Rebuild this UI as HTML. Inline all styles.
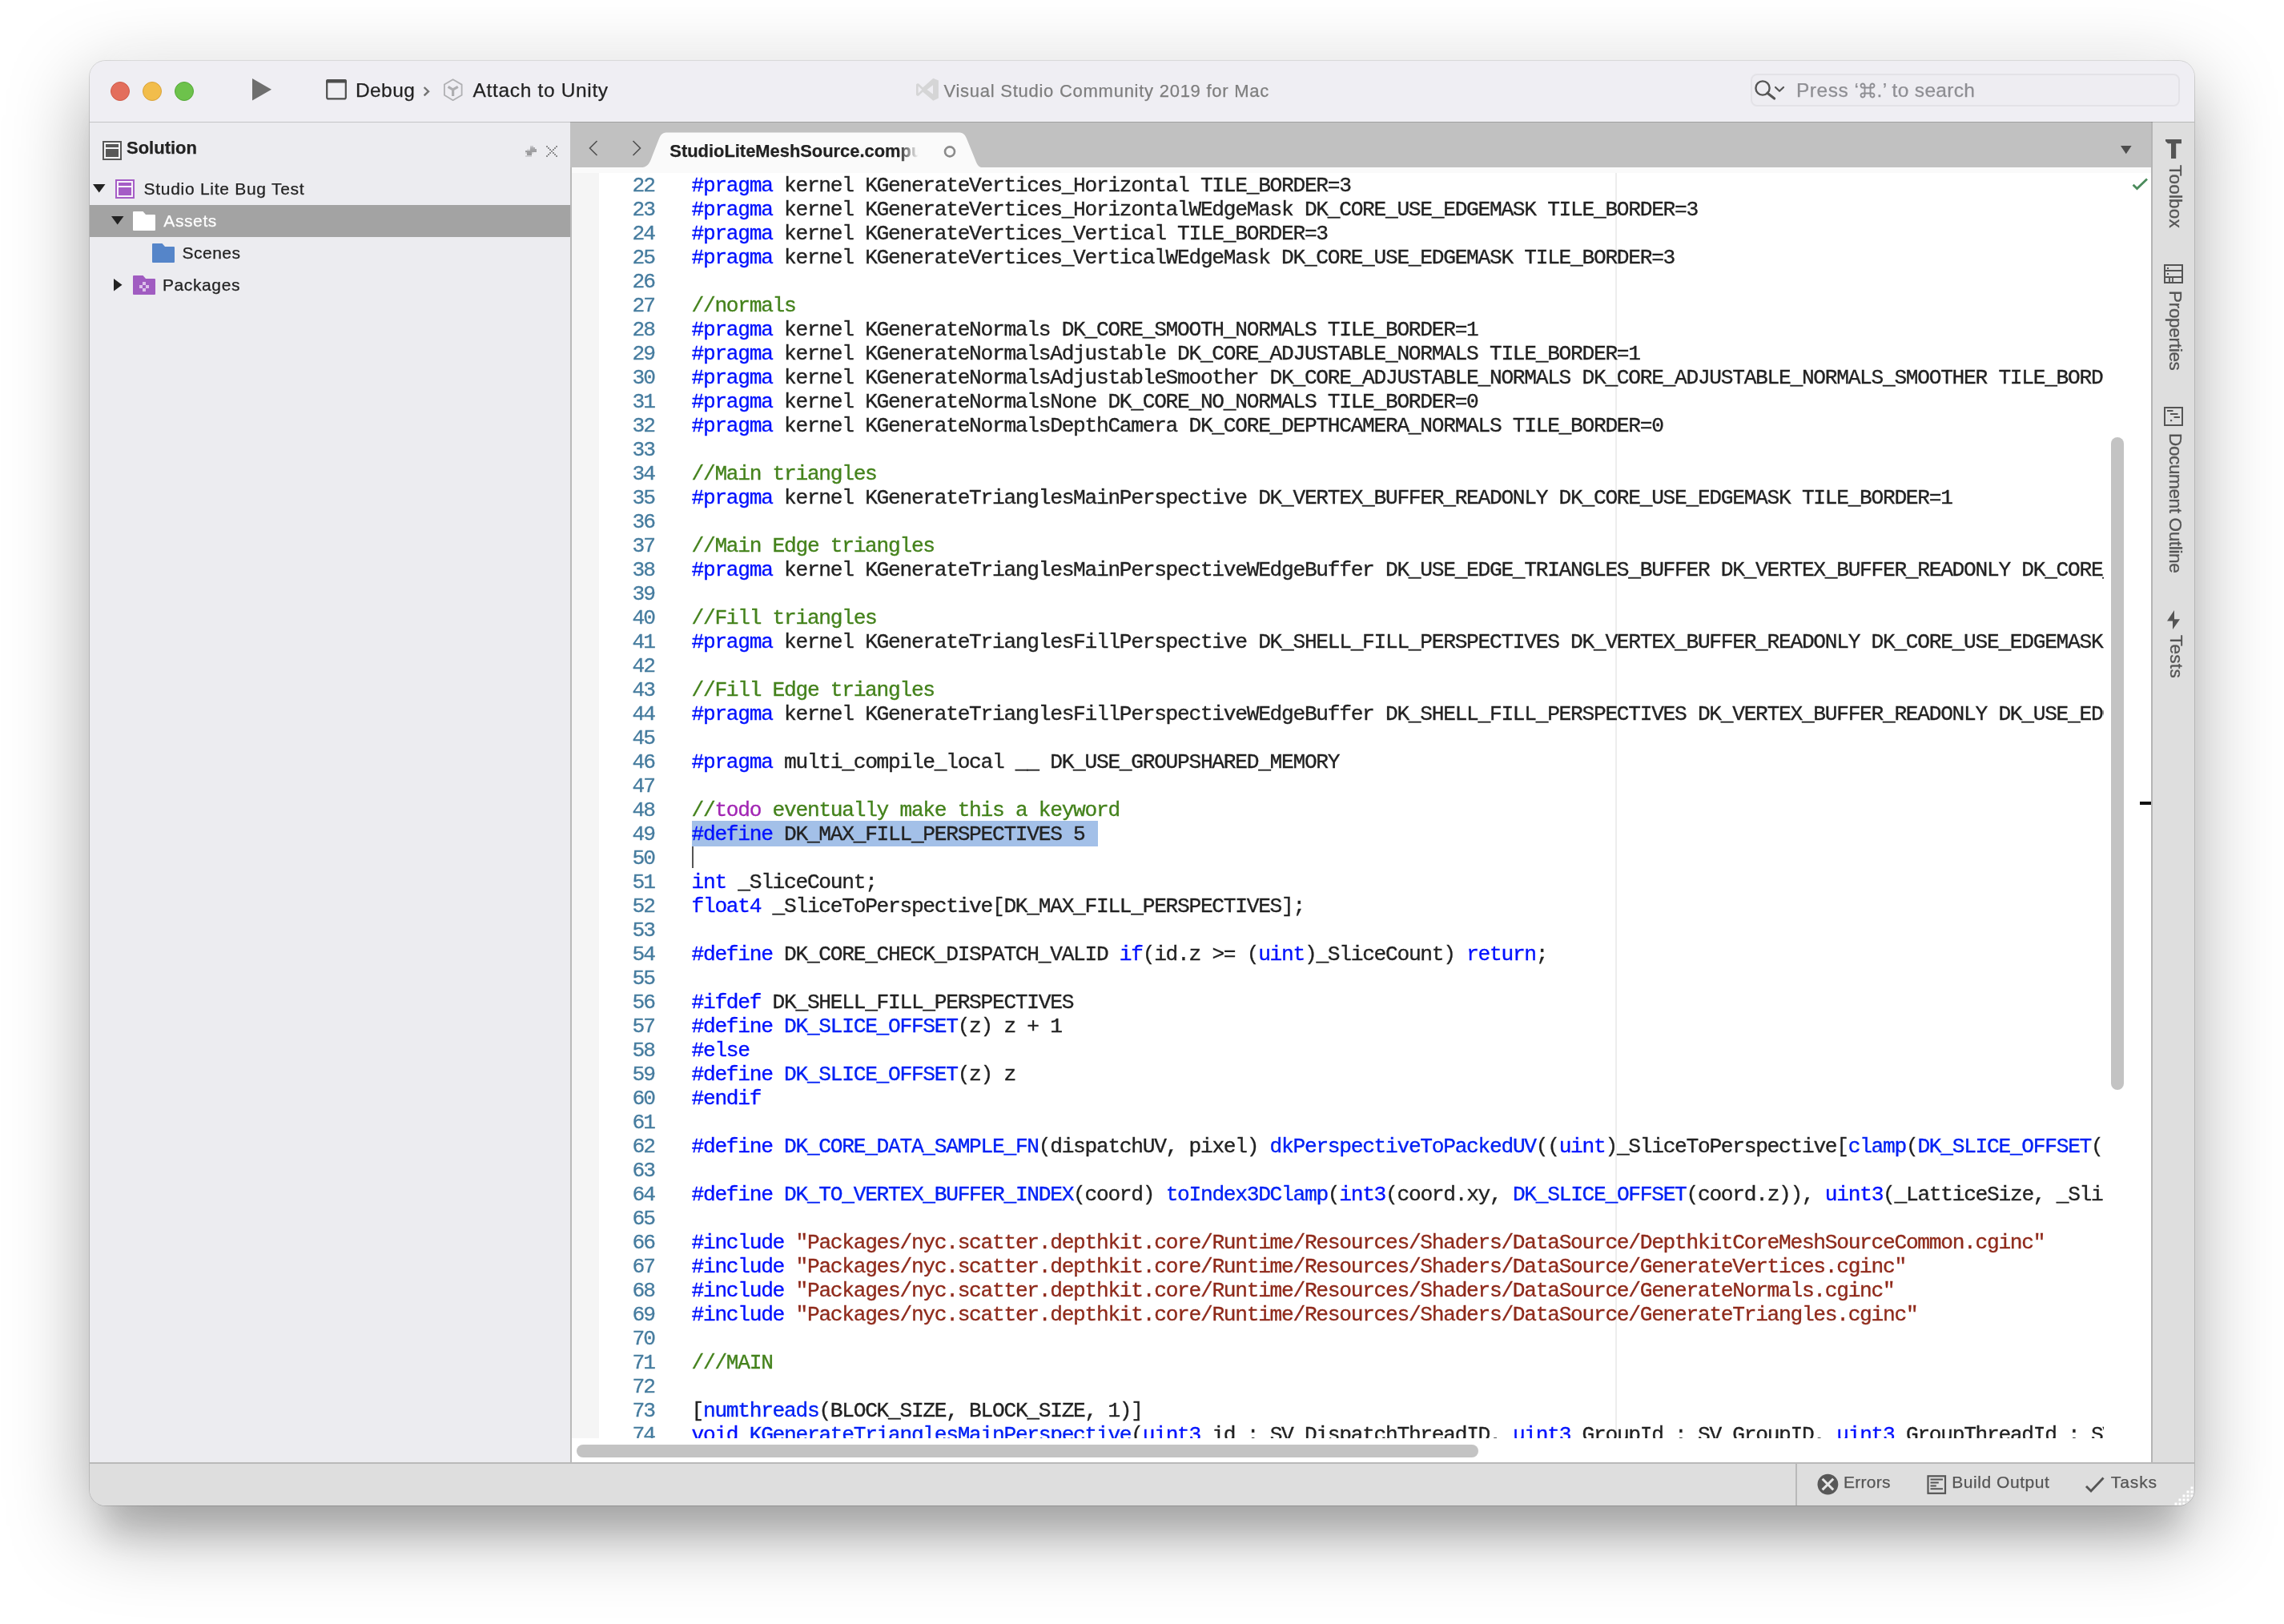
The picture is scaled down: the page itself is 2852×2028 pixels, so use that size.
<!DOCTYPE html>
<html lang="en"><head><meta charset="utf-8"><title>Visual Studio Community 2019 for Mac</title>
<style>
*{box-sizing:border-box;margin:0;padding:0}
html,body{width:2852px;height:2028px;background:#fff;overflow:hidden;font-family:"Liberation Sans",sans-serif}
body{position:relative;font-family:"Liberation Sans",sans-serif;color:#222}
i{font-style:normal}
.abs,.t{position:absolute}
.t{white-space:pre;line-height:40px;height:40px;-webkit-text-stroke:0.25px}
#win{position:absolute;left:112px;top:76px;width:2628px;height:1804px;border-radius:20px;background:#ececf0;
 box-shadow:0 -46px 30px -30px rgba(255,255,255,.35),0 0 0 1px rgba(0,0,0,.13),0 30px 100px rgba(0,0,0,.34),0 56px 36px -20px rgba(0,0,0,.12)}
#clip{will-change:transform;position:absolute;left:0;top:0;width:2628px;height:1804px;border-radius:20px;overflow:hidden}
#titlebar{left:0;top:0;width:2628px;height:76px;background:#efeef3}
#tbline{left:0;top:76px;width:2628px;height:1.4px;background:rgba(0,0,0,.17);z-index:5}
.light{position:absolute;top:26px;width:24px;height:24px;border-radius:50%}
#side{left:0;top:76px;width:600px;height:1675px;background:#ececf0}
#sel{left:0;top:180px;width:600px;height:40px;background:#a3a3a3}
#vdiv{left:600px;top:133px;width:2px;height:1618px;background:#b9b9b9}
#tabbar{left:600px;top:76px;width:1975px;height:57px;background:#c1c1c1}
#strip{left:602px;top:133px;width:1973px;height:7px;background:#fafafa}
#codebg{left:602px;top:140px;width:1973px;height:1610px;background:#fff}
#gutter{left:602px;top:140px;width:34px;height:1580px;background:#f5f5f5}
#ruler{left:1905px;top:140px;width:2px;height:1580px;background:#ededed}
#selhl{left:752px;top:949px;width:507px;height:31.5px;background:#a3c0e8}
#caret{left:752px;top:980.5px;width:2px;height:27.5px;background:#555}
.mono{font-family:"Liberation Mono",monospace;font-size:26px;letter-spacing:-1.155px;line-height:30px;white-space:pre;position:absolute}
#numclip{left:636px;top:140px;width:104px;height:1580px;overflow:hidden}
#nums{left:41.4px;top:0.91px;color:#467c9f;font-size:26.2px;letter-spacing:-1.9px;-webkit-text-stroke:0.3px}
#codeclip{left:740px;top:140px;width:1774.8px;height:1580px;overflow:hidden}
#code{left:11.5px;top:0.91px;color:#222;-webkit-text-stroke:0.35px;font-size:26.2px;letter-spacing:-1.2736px}
.k{color:#0010ff}.f{color:#0020f5}.c{color:#44821c}.s{color:#8f2a1b}.t0{color:#a01fa0}
#code .t{position:static;color:#a226b4;-webkit-text-stroke:inherit;line-height:inherit;height:auto}
#vthumb{left:2524px;top:470px;width:16px;height:815px;border-radius:8px;background:#c3c3c3}
#hthumb{left:608px;top:1728px;width:1126px;height:15.5px;border-radius:8px;background:#c3c3c3}
#marker{left:2560px;top:925px;width:14px;height:3.5px;background:#111}
#rside{left:2574px;top:76px;width:54px;height:1675px;background:#dedede;border-left:2px solid #b4b4b4}
#status{left:0;top:1750px;width:2628px;height:54px;background:#dedede;border-top:2px solid #b9b9b9}
#ssep{left:2130px;top:1751px;width:2px;height:53px;background:#b9b9b9}
.rot{-webkit-text-stroke:0.3px;position:absolute;white-space:pre;transform-origin:0 0;transform:rotate(90deg);font-size:22.5px;line-height:30px;height:30px;color:#555}
svg{position:absolute;overflow:visible}

</style></head>
<body>
<div id="win"><div id="clip">
<div class="abs" id="titlebar"></div>
<div class="abs" id="tbline"></div>
<div class="light" style="left:26px;background:#e36e5c;border:1px solid #cf5a48"></div>
<div class="light" style="left:66px;background:#f2bd4b;border:1px solid #d9a23a"></div>
<div class="light" style="left:106px;background:#6dc24b;border:1px solid #54a838"></div>
<svg style="left:203.00px;top:22.00px" width="24" height="28" viewBox="0 0 24 28"><path d="M0 0 L24 13.75 L0 27.5 Z" fill="#6e6e6e"/></svg>
<svg style="left:295.00px;top:22.00px" width="26" height="27" viewBox="0 0 26 27"><rect x="1.2" y="2" width="23.6" height="23.4" rx="2" fill="none" stroke="#4e4e4e" stroke-width="2.2"/><path d="M0.1 3 Q0.1 0.9 2.2 0.9 L23.8 0.9 Q25.9 0.9 25.9 3 L25.9 5.4 L0.1 5.4 Z" fill="#4e4e4e"/></svg>
<span class="t" style="left:332.00px;top:16.76px;font-size:24.5px;color:#222;letter-spacing:0.4px;">Debug</span>
<svg style="left:415.00px;top:30.00px" width="12" height="16" viewBox="0 0 12 16"><path d="M2.6 3 L8 8.2 L2.6 13.4" fill="none" stroke="#737373" stroke-width="2.4"/></svg>
<svg style="left:441.00px;top:22.00px" width="26" height="29" viewBox="0 0 26 29"><path d="M12.6 1.2 L23.6 7.6 L23.6 20.8 L12.6 27.2 L1.9 20.8 L1.9 7.6 Z" fill="none" stroke="#b0b0b3" stroke-width="1.8" stroke-linejoin="round"/><path d="M6.6 10.4 L12.6 14 L18.8 10.4 M12.6 14 L12.6 22" fill="none" stroke="#aeaeb1" stroke-width="3.2"/></svg>
<span class="t" style="left:478.55px;top:16.76px;font-size:24.5px;color:#222;letter-spacing:0.66px;">Attach to Unity</span>
<svg style="left:1031.00px;top:21.00px" width="30" height="30" viewBox="0 0 30 30"><path d="M22.3 0.8 L28.9 3.6 L28.9 25.5 L22.3 28.7 L9.3 17.8 L4.2 22.6 Q3 23.1 2 22.4 L1 21.6 L1 8.4 L2 7.6 Q3 6.9 4.2 7.4 L9.3 12.2 Z M22 9.3 L22 20.6 L14.6 15 Z M3.6 10.4 L3.6 19.6 L8.2 15 Z" fill="#d5d5d6" fill-rule="evenodd"/></svg>
<span class="t" style="left:1066.45px;top:17.78px;font-size:22px;color:#7e7e7e;letter-spacing:0.74px;">Visual Studio Community 2019 for Mac</span>
<div class="abs" style="left:2074px;top:16px;width:536px;height:41px;border-radius:8px;border:2px solid #e3e2e7;background:#eeedf2"></div>
<svg style="left:2078.00px;top:22.00px" width="40" height="28" viewBox="0 0 40 28"><circle cx="11" cy="12" r="8.6" fill="none" stroke="#555" stroke-width="2.4"/><path d="M17 18.3 L25.6 25" stroke="#555" stroke-width="3.2" stroke-linecap="round"/><path d="M27 11 L32 15.8 L37 11" fill="none" stroke="#555" stroke-width="2.2" stroke-linecap="round" stroke-linejoin="round"/></svg>
<span class="t" style="left:2131.00px;top:16.76px;font-size:24.5px;color:#8e8e93;letter-spacing:0.5px;">Press ‘</span>
<svg style="left:2210.00px;top:27.00px" width="20" height="20" viewBox="0 0 20 20"><path d="M6.5 6.5 H13.5 V13.5 H6.5 Z M6.5 6.5 V4.2 A2.5 2.5 0 1 0 4.2 6.5 Z M13.5 6.5 H15.8 A2.5 2.5 0 1 0 13.5 4.2 Z M13.5 13.5 V15.8 A2.5 2.5 0 1 0 15.8 13.5 Z M6.5 13.5 H4.2 A2.5 2.5 0 1 0 6.5 15.8 Z" fill="none" stroke="#8e8e93" stroke-width="1.9"/></svg>
<span class="t" style="left:2231.50px;top:16.76px;font-size:24.5px;color:#8e8e93;letter-spacing:0.32px;">.’ to search</span>
<div class="abs" id="side"></div>
<svg style="left:16.00px;top:100.00px" width="24" height="24" viewBox="0 0 24 24"><rect x="1" y="1" width="22" height="22" fill="#f4f4f6" stroke="#585858" stroke-width="2"/><rect x="4" y="4" width="16" height="4" fill="#585858"/><rect x="4" y="10" width="16" height="10" fill="#585858"/></svg>
<span class="t" style="left:46.00px;top:89.08px;font-size:22px;color:#222;font-weight:bold;">Solution</span>
<svg style="left:544.00px;top:106.00px" width="14" height="14" viewBox="0 0 14 14"><g fill="#9b9b9d"><rect x="6" y="0" width="4" height="2" fill-opacity="0.45"/><rect x="6" y="2" width="6" height="2" fill-opacity="0.8"/><rect x="2" y="4" width="4" height="2" fill-opacity="0.25"/><rect x="6" y="4" width="8" height="2" fill-opacity="0.9"/><rect x="0" y="6" width="14" height="2" fill-opacity="0.95"/><rect x="0" y="8" width="2" height="2" fill-opacity="0.3"/><rect x="2" y="8" width="6" height="2" fill-opacity="1.0"/><rect x="8" y="8" width="2" height="2" fill-opacity="0.3"/><rect x="2" y="10" width="6" height="2" fill-opacity="1.0"/><rect x="0" y="12" width="8" height="2" fill-opacity="0.35"/></g></svg>
<svg style="left:570.00px;top:106.00px" width="14" height="14" viewBox="0 0 14 14"><g fill="#8e8e90"><rect x="0" y="0" width="2" height="2"/><rect x="12" y="0" width="2" height="2"/><rect x="2" y="2" width="2" height="2"/><rect x="10" y="2" width="2" height="2"/><rect x="4" y="4" width="2" height="2"/><rect x="8" y="4" width="2" height="2"/><rect x="6" y="6" width="2" height="2"/><rect x="8" y="8" width="2" height="2"/><rect x="4" y="8" width="2" height="2"/><rect x="10" y="10" width="2" height="2"/><rect x="2" y="10" width="2" height="2"/><rect x="12" y="12" width="2" height="2"/><rect x="0" y="12" width="2" height="2"/></g></svg>
<div class="abs" id="sel"></div>
<svg style="left:3.50px;top:154.00px" width="16" height="11" viewBox="0 0 16 11"><path d="M0 0 L15.5 0 L7.75 10.5 Z" fill="#222"/></svg>
<svg style="left:32.00px;top:148.00px" width="24" height="24" viewBox="0 0 24 24"><rect x="1" y="1" width="22" height="22" fill="#f7f2fa" stroke="#a55cc6" stroke-width="2"/><rect x="4" y="4" width="16" height="4" fill="#a55cc6"/><rect x="4" y="10" width="16" height="10" fill="#a55cc6"/></svg>
<span class="t" style="left:67.50px;top:139.82px;font-size:21px;color:#222;letter-spacing:0.72px;">Studio Lite Bug Test</span>
<svg style="left:27.25px;top:194.00px" width="16" height="11" viewBox="0 0 16 11"><path d="M0 0 L15.5 0 L7.75 10.5 Z" fill="#222"/></svg>
<svg style="left:54.00px;top:188.00px" width="28" height="24" viewBox="0 0 28 24"><path d="M1 0 H12.5 L16 4 H27 Q28 4 28 5 V23 Q28 24 27 24 H1 Q0 24 0 23 V1 Q0 0 1 0 Z" fill="#ffffff"/></svg>
<span class="t" style="left:92.25px;top:179.82px;font-size:21px;color:#fff;letter-spacing:0.62px;">Assets</span>
<svg style="left:78.00px;top:228.00px" width="28" height="24" viewBox="0 0 28 24"><path d="M1 0 H12.5 L16 4 H27 Q28 4 28 5 V23 Q28 24 27 24 H1 Q0 24 0 23 V1 Q0 0 1 0 Z" fill="#5585c9"/></svg>
<span class="t" style="left:115.50px;top:219.82px;font-size:21px;color:#222;letter-spacing:0.5px;">Scenes</span>
<svg style="left:30.25px;top:271.75px" width="11" height="16" viewBox="0 0 11 16"><path d="M0 0 L10.5 7.75 L0 15.5 Z" fill="#222"/></svg>
<svg style="left:54.00px;top:268.00px" width="28" height="24" viewBox="0 0 28 24"><path d="M1 0 H12.5 L16 4 H27 Q28 4 28 5 V23 Q28 24 27 24 H1 Q0 24 0 23 V1 Q0 0 1 0 Z" fill="#a05cc1"/><path d="M12 8 h4 v4 h-4 z M8 12 h4 v4 h-4 z M16 12 h4 v4 h-4 z M12 16 h4 v4 h-4 z" fill="#dcc0ea"/></svg>
<span class="t" style="left:90.90px;top:259.82px;font-size:21px;color:#222;letter-spacing:0.62px;">Packages</span>
<div class="abs" id="vdiv"></div>
<div class="abs" id="tabbar"></div>
<div class="abs" id="strip"></div>
<div class="abs" id="codebg"></div>
<div class="abs" id="gutter"></div>
<div class="abs" id="ruler"></div>
<svg style="left:623.00px;top:99.00px" width="12" height="20" viewBox="0 0 12 20"><path d="M10.5 1 L1.5 10 L10.5 19" fill="none" stroke="#505050" stroke-width="1.6"/></svg>
<svg style="left:677.00px;top:99.00px" width="12" height="20" viewBox="0 0 12 20"><path d="M1.5 1 L10.5 10 L1.5 19" fill="none" stroke="#505050" stroke-width="1.6"/></svg>
<svg style="left:678.00px;top:84.00px" width="450" height="50" viewBox="0 0 450 50"><path d="M8 49.5 C19 49.5 21 44 24 36 L33 13 C35.5 7 38 5.5 44 5.5 L406 5.5 C412 5.5 414.5 7 417 13 L428 40 C430.5 46.5 432 49.5 440 49.5 Z" fill="#fafafa"/></svg>
<span class="t" style="left:724.30px;top:92.61px;font-size:21.9px;font-weight:bold;color:#222;width:312.0px;overflow:hidden;-webkit-mask-image:linear-gradient(90deg,#000 0,#000 286px,rgba(0,0,0,0) 311px);mask-image:linear-gradient(90deg,#000 0,#000 286px,rgba(0,0,0,0) 311px)">StudioLiteMeshSource.compute</span>
<svg style="left:1064.00px;top:103.00px" width="20" height="20" viewBox="0 0 20 20"><circle cx="10" cy="10.4" r="6" fill="none" stroke="#8b8b8b" stroke-width="2.6"/></svg>
<svg style="left:2536.00px;top:106.00px" width="14" height="11" viewBox="0 0 14 11"><path d="M0 0 L13.6 0 L6.8 10.3 Z" fill="#4d4d4d"/></svg>
<div class="abs" id="selhl"></div>
<div class="abs" id="caret"></div>
<div class="abs" id="numclip"><pre class="mono" id="nums">22
23
24
25
26
27
28
29
30
31
32
33
34
35
36
37
38
39
40
41
42
43
44
45
46
47
48
49
50
51
52
53
54
55
56
57
58
59
60
61
62
63
64
65
66
67
68
69
70
71
72
73
74</pre></div>
<div class="abs" id="codeclip"><pre class="mono" id="code"><i class="k">#pragma</i> kernel KGenerateVertices_Horizontal TILE_BORDER=3
<i class="k">#pragma</i> kernel KGenerateVertices_HorizontalWEdgeMask DK_CORE_USE_EDGEMASK TILE_BORDER=3
<i class="k">#pragma</i> kernel KGenerateVertices_Vertical TILE_BORDER=3
<i class="k">#pragma</i> kernel KGenerateVertices_VerticalWEdgeMask DK_CORE_USE_EDGEMASK TILE_BORDER=3

<i class="c">//normals</i>
<i class="k">#pragma</i> kernel KGenerateNormals DK_CORE_SMOOTH_NORMALS TILE_BORDER=1
<i class="k">#pragma</i> kernel KGenerateNormalsAdjustable DK_CORE_ADJUSTABLE_NORMALS TILE_BORDER=1
<i class="k">#pragma</i> kernel KGenerateNormalsAdjustableSmoother DK_CORE_ADJUSTABLE_NORMALS DK_CORE_ADJUSTABLE_NORMALS_SMOOTHER TILE_BORDER=1
<i class="k">#pragma</i> kernel KGenerateNormalsNone DK_CORE_NO_NORMALS TILE_BORDER=0
<i class="k">#pragma</i> kernel KGenerateNormalsDepthCamera DK_CORE_DEPTHCAMERA_NORMALS TILE_BORDER=0

<i class="c">//Main triangles</i>
<i class="k">#pragma</i> kernel KGenerateTrianglesMainPerspective DK_VERTEX_BUFFER_READONLY DK_CORE_USE_EDGEMASK TILE_BORDER=1

<i class="c">//Main Edge triangles</i>
<i class="k">#pragma</i> kernel KGenerateTrianglesMainPerspectiveWEdgeBuffer DK_USE_EDGE_TRIANGLES_BUFFER DK_VERTEX_BUFFER_READONLY DK_CORE_USE_EDGEMASK TILE_BORDER=1

<i class="c">//Fill triangles</i>
<i class="k">#pragma</i> kernel KGenerateTrianglesFillPerspective DK_SHELL_FILL_PERSPECTIVES DK_VERTEX_BUFFER_READONLY DK_CORE_USE_EDGEMASK TILE_BORDER=1

<i class="c">//Fill Edge triangles</i>
<i class="k">#pragma</i> kernel KGenerateTrianglesFillPerspectiveWEdgeBuffer DK_SHELL_FILL_PERSPECTIVES DK_VERTEX_BUFFER_READONLY DK_USE_EDGE_TRIANGLES_BUFFER DK_CORE_USE_EDGEMASK

<i class="k">#pragma</i> multi_compile_local __ DK_USE_GROUPSHARED_MEMORY

<i class="c">//</i><i class="t">todo</i><i class="c"> eventually make this a keyword</i>
<i class="k">#define</i> DK_MAX_FILL_PERSPECTIVES 5

<i class="k">int</i> _SliceCount;
<i class="k">float4</i> _SliceToPerspective[DK_MAX_FILL_PERSPECTIVES];

<i class="k">#define</i> DK_CORE_CHECK_DISPATCH_VALID <i class="k">if</i>(id.z &gt;= (<i class="k">uint</i>)_SliceCount) <i class="k">return</i>;

<i class="k">#ifdef</i> DK_SHELL_FILL_PERSPECTIVES
<i class="k">#define</i> <i class="f">DK_SLICE_OFFSET</i>(z) z + 1
<i class="k">#else</i>
<i class="k">#define</i> <i class="f">DK_SLICE_OFFSET</i>(z) z
<i class="k">#endif</i>

<i class="k">#define</i> <i class="f">DK_CORE_DATA_SAMPLE_FN</i>(dispatchUV, pixel) <i class="f">dkPerspectiveToPackedUV</i>((<i class="k">uint</i>)_SliceToPerspective[<i class="f">clamp</i>(<i class="f">DK_SLICE_OFFSET</i>(pixel.z), 0, DK_MAX_FILL_PERSPECTIVES)]

<i class="k">#define</i> <i class="f">DK_TO_VERTEX_BUFFER_INDEX</i>(coord) <i class="f">toIndex3DClamp</i>(<i class="k">int3</i>(coord.xy, <i class="f">DK_SLICE_OFFSET</i>(coord.z)), <i class="k">uint3</i>(_LatticeSize, _SliceCount))

<i class="k">#include</i> <i class="s">&quot;Packages/nyc.scatter.depthkit.core/Runtime/Resources/Shaders/DataSource/DepthkitCoreMeshSourceCommon.cginc&quot;</i>
<i class="k">#include</i> <i class="s">&quot;Packages/nyc.scatter.depthkit.core/Runtime/Resources/Shaders/DataSource/GenerateVertices.cginc&quot;</i>
<i class="k">#include</i> <i class="s">&quot;Packages/nyc.scatter.depthkit.core/Runtime/Resources/Shaders/DataSource/GenerateNormals.cginc&quot;</i>
<i class="k">#include</i> <i class="s">&quot;Packages/nyc.scatter.depthkit.core/Runtime/Resources/Shaders/DataSource/GenerateTriangles.cginc&quot;</i>

<i class="c">///MAIN</i>

[<i class="f">numthreads</i>(BLOCK_SIZE, BLOCK_SIZE, 1)]
<i class="k">void</i> <i class="f">KGenerateTrianglesMainPerspective</i>(<i class="k">uint3</i> id : SV_DispatchThreadID, <i class="k">uint3</i> GroupId : SV_GroupID, <i class="k">uint3</i> GroupThreadId : SV_GroupThreadID)</pre></div>
<svg style="left:2548.00px;top:144.00px" width="24" height="20" viewBox="0 0 24 20"><path d="M3.6 10.8 L8.5 15.6 L21 3.6" fill="none" stroke="#4b8b5c" stroke-width="2.8"/></svg>
<div class="abs" id="vthumb"></div>
<div class="abs" id="marker"></div>
<div class="abs" id="hthumb"></div>
<div class="abs" id="rside"></div>
<svg style="left:2590.00px;top:97.00px" width="24" height="26" viewBox="0 0 24 26"><path d="M2 1 H22 V6.3 H15.2 V25 H9 V6.3 H5 L2 3.2 Z" fill="#555"/></svg>
<span class="rot" style="left:2619.00px;top:129.50px;font-size:22.5px;letter-spacing:0.2px;">Toolbox</span>
<svg style="left:2590.00px;top:254.00px" width="24" height="24" viewBox="0 0 24 24"><rect x="1" y="1" width="22" height="22" fill="none" stroke="#555" stroke-width="2"/><path d="M1 8 H23 M1 16 H23 M7 16 V23 M11 16 V23" stroke="#555" stroke-width="1.8" fill="none"/><rect x="4" y="4" width="2" height="2" fill="#555"/><rect x="4" y="11" width="2" height="2" fill="#555"/></svg>
<span class="rot" style="left:2619.40px;top:286.80px;font-size:22.5px;letter-spacing:-0.3px;">Properties</span>
<svg style="left:2590.00px;top:432.00px" width="24" height="24" viewBox="0 0 24 24"><rect x="1" y="1" width="22" height="22" fill="none" stroke="#555" stroke-width="2"/><path d="M4 5 H11.5 M8 9 H17.5 M12.5 13 H20 " stroke="#555" stroke-width="2" fill="none"/><rect x="8" y="16" width="2.2" height="2.2" fill="#555"/></svg>
<span class="rot" style="left:2619.40px;top:465.40px;font-size:22.5px;letter-spacing:-0.36px;">Document Outline</span>
<svg style="left:2593.00px;top:685.00px" width="18" height="26" viewBox="0 0 18 26"><path d="M10 1 L1 14.5 L8 14.5 L8 25 L17 12.2 L10 12.2 Z" fill="#555"/></svg>
<span class="rot" style="left:2619.80px;top:717.00px;font-size:22.5px;letter-spacing:0.28px;">Tests</span>
<div class="abs" id="status"></div>
<div class="abs" id="ssep"></div>
<svg style="left:2157.00px;top:1764.00px" width="27" height="27" viewBox="0 0 27 27"><circle cx="13.4" cy="13.6" r="12.9" fill="#585858"/><path d="M6.6 6.8 L20.2 20.4 M20.2 6.8 L6.6 20.4" stroke="#e6e6e6" stroke-width="3"/></svg>
<span class="t" style="left:2190.00px;top:1755.32px;font-size:21px;color:#555;letter-spacing:0.28px;">Errors</span>
<svg style="left:2294.00px;top:1766.00px" width="24" height="24" viewBox="0 0 24 24"><rect x="1.5" y="1.3" width="21.5" height="21.5" fill="none" stroke="#555" stroke-width="2.2"/><path d="M4.5 5.6 H20 M4.5 9.4 H14.8 M4.5 13.4 H11.8 M4.5 17.3 H20" stroke="#555" stroke-width="2" fill="none"/></svg>
<span class="t" style="left:2325.25px;top:1755.32px;font-size:21px;color:#555;letter-spacing:0.55px;">Build Output</span>
<svg style="left:2491.00px;top:1767.00px" width="26" height="22" viewBox="0 0 26 22"><path d="M2 13 L8 19 L23.5 2.5" fill="none" stroke="#555" stroke-width="2.9"/></svg>
<span class="t" style="left:2523.75px;top:1755.32px;font-size:21px;color:#555;letter-spacing:0.9px;">Tasks</span>
<svg style="left:2606.00px;top:1780.00px" width="22" height="24" viewBox="0 0 22 24"><g fill="#fff"><rect x="17.5" y="0.5" width="3" height="3"/><rect x="17.5" y="5.5" width="3" height="3"/><rect x="12.5" y="5.5" width="3" height="3"/><rect x="17.5" y="10.5" width="3" height="3"/><rect x="12.5" y="10.5" width="3" height="3"/><rect x="7.5" y="10.5" width="3" height="3"/><rect x="17.5" y="15.5" width="3" height="3"/><rect x="12.5" y="15.5" width="3" height="3"/><rect x="7.5" y="15.5" width="3" height="3"/><rect x="2.5" y="15.5" width="3" height="3"/><rect x="17.5" y="20.5" width="3" height="3"/><rect x="12.5" y="20.5" width="3" height="3"/><rect x="7.5" y="20.5" width="3" height="3"/><rect x="2.5" y="20.5" width="3" height="3"/><rect x="-2.5" y="20.5" width="3" height="3"/></g></svg>
</div></div>
</body></html>
